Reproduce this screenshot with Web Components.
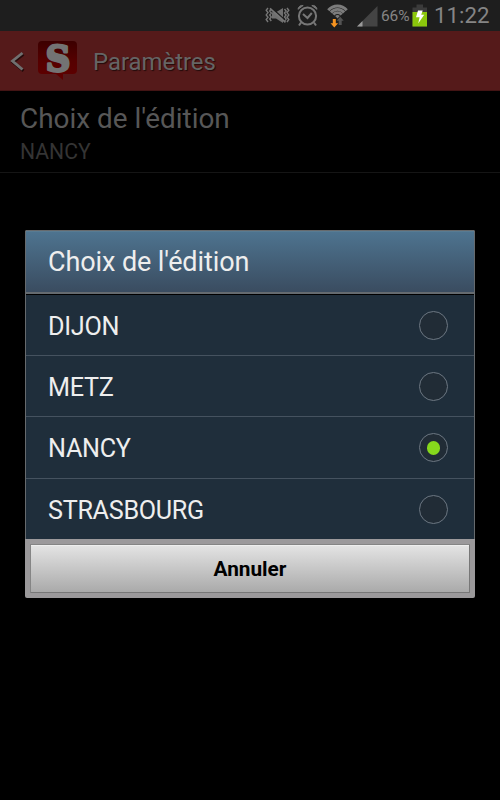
<!DOCTYPE html>
<html lang="fr">
<head>
<meta charset="utf-8">
<title>Paramètres</title>
<style>
    html, body { margin: 0; height: 100%; background: #000; }
    body { font-family: Roboto, "Noto Sans", sans-serif; overflow: hidden; }
</style>
</head>
<body>
<settings-screen>
    <status-bar slot="status" battery="66%" time="11:22"></status-bar>
    <action-bar slot="header">Paramètres</action-bar>
    <preference-item summary="NANCY">Choix de l'édition</preference-item>
    <choice-dialog slot="dialog" heading="Choix de l'édition" cancel="Annuler">
        <choice-row>DIJON</choice-row>
        <choice-row>METZ</choice-row>
        <choice-row checked>NANCY</choice-row>
        <choice-row>STRASBOURG</choice-row>
    </choice-dialog>
</settings-screen>

<script>
(function () {
    // Registers an element whose shadow root holds the given markup.
    function define(name, html, setup) {
        var template = document.createElement('template');
        template.innerHTML = html;
        customElements.define(name, class extends HTMLElement {
            connectedCallback() {
                if (this.shadowRoot) return;
                this.attachShadow({ mode: 'open' });
                this.shadowRoot.appendChild(template.content.cloneNode(true));
                if (setup) setup(this, this.shadowRoot);
            }
        });
    }

    function fill(root, id, text) {
        root.getElementById(id).textContent = text || '';
    }

    // --- Screen ---
    define('settings-screen', `
        <style>
        :host { display: block; position: relative; width: 500px; height: 800px; background: #000; }
        .overlay { position: absolute; inset: 0; padding: 230px 25px 0; }
        </style>
        <slot name="status"></slot>
        <slot name="header"></slot>
        <slot></slot>
        <div class="overlay"><slot name="dialog"></slot></div>
    `);

    // --- Status bar ---
    define('status-bar', `
        <style>
        :host { display: flex; box-sizing: border-box; height: 31px; padding-right: 6px; background: #1e1e1e; color: #858585; justify-content: flex-end; }
        svg { display: block; flex: none; }
        #battery { width: 30px; padding-left: 1px; margin-right: -1px; font-size: 15.5px; line-height: 32px; letter-spacing: -0.1px; }
        #time { width: 66px; box-sizing: border-box; padding-left: 6px; font-size: 22.3px; line-height: 31px; }
        </style>
        <svg width="120" height="31" viewBox="260 0 120 31" fill="none" stroke="#777" stroke-width="1.6">
            <!-- vibrate / muted -->
            <path d="M268 8l-1.8 2.3 1.8 2.3-1.8 2.3 1.8 2.3-1.8 2.3 1.8 2.5M271.3 9l-1.6 2 1.6 2-1.6 2 1.6 2-1.6 2 1.6 2M287 8l1.8 2.3-1.8 2.3 1.8 2.3-1.8 2.3 1.8 2.3-1.8 2.5M284.5 9l1.6 2-1.6 2 1.6 2-1.6 2 1.6 2-1.6 2" stroke-width="1.4"/>
            <path d="M272 12.3h4l7-4.3v15l-7-4.5h-4z" fill="#707070" stroke="none"/>
            <path d="M272 8.3l13 11.7" stroke="#1e1e1e" stroke-width="1.5"/>
            <path d="M270 8.3l15.5 14" stroke="#777" stroke-width="1.7"/>
            <!-- alarm clock -->
            <circle cx="307.5" cy="16" r="8.6" stroke-width="2"/>
            <path d="M303 14l4.5 4 4.3-5" stroke-width="2"/>
            <path d="M298 9.3a4.3 4.3 0 0 1 5.2-3.8zM317 9.3a4.3 4.3 0 0 0-5.2-3.8z" fill="#777" stroke-width="1"/>
            <path d="M301 22.5l-2 3M314 22.5l2 3" stroke-width="2"/>
            <!-- wifi -->
            <path d="M328.3 10.3A12 12 0 0 1 346.7 10.3M330.9 12.5A8.6 8.6 0 0 1 344.1 12.5M333.4 14.6A5.3 5.3 0 0 1 341.6 14.6" stroke="#7c7c7c" stroke-width="2.9"/>
            <path d="M335.2 16.1A3 3 0 0 1 339.8 16.1L337.5 18.5z" fill="#7c7c7c" stroke="none"/>
            <path d="M332.8 19h3v4.3h2.3l-3.8 4.2-3.8-4.2h2.3z" fill="#f79420" stroke="none"/>
            <path d="M338.7 25v-4.2h-2l3.5-4 3.5 4h-2V25z" fill="#535353" stroke="none"/>
            <!-- signal -->
            <path d="M377.5 6v20.5h-20.5z" fill="#444" stroke="none"/>
            <path d="M362.5 21v5.5h-5.5z" fill="#999" stroke="none"/>
        </svg>
        <span id="battery"></span>
        <svg width="18" height="31" viewBox="410 0 18 31">
            <path d="M416.5 4.5h6.5v3h4v19h-14.5v-19h4z" fill="#3b3b3b"/>
            <path d="M412.5 12h14.5v14.5h-14.5z" fill="#8cc70c"/>
            <path d="M418 10.5h4.7l-1.5 4.3h3l-6 8.7 1.4-6.2h-3.6z" fill="#fff"/>
        </svg>
        <span id="time"></span>
    `, function (el, root) {
        fill(root, 'battery', el.getAttribute('battery'));
        fill(root, 'time', el.getAttribute('time'));
    });

    // --- Action bar ---
    define('action-bar', `
        <style>
        :host { display: flex; height: 60px; background: #551a1a; color: #656565; box-shadow: inset 0 -1px #431414; }
        svg { display: block; flex: none; }
        .title { padding: 0 0 0 13px; font-size: 23.9px; line-height: 63px; text-shadow: 1px 1px 1px rgba(0, 0, 0, 0.6); }
        </style>
        <svg width="80" height="60" viewBox="0 31 80 60">
            <defs>
                <linearGradient id="red" x1="0" y1="0" x2="0" y2="1">
                    <stop offset="0" stop-color="#3c0000"/>
                    <stop offset="0.5" stop-color="#550000"/>
                    <stop offset="1" stop-color="#600000"/>
                </linearGradient>
            </defs>
            <path d="M23.5 54.5L13 62.3l10.5 8.5" fill="none" stroke="#250b0b" stroke-width="2.8"/>
            <path d="M22.5 53L12.5 61l10 8.5" fill="none" stroke="#707070" stroke-width="2.8"/>
            <path d="M42 41h31a4 4 0 0 1 4 4v25a4 4 0 0 1-4 4h-10v6l-7-6h-14a4 4 0 0 1-4-4v-25a4 4 0 0 1 4-4z" fill="url(#red)"/>
            <text transform="translate(58 70.5) scale(0.97 1)" text-anchor="middle" font-family="DejaVu Serif, serif" font-weight="bold" font-size="35" fill="#737373" stroke="#737373" stroke-width="2.8" stroke-linejoin="round">S</text>
        </svg>
        <div class="title"><slot></slot></div>
    `);

    // --- Preference ---
    define('preference-item', `
        <style>
        :host { display: block; box-sizing: border-box; height: 82px; padding: 11px 20px 0; border-bottom: 1px solid #151515; }
        .title { font-size: 27.9px; line-height: 33px; color: #575757; }
        #summary { font-size: 21.2px; line-height: 33px; color: #343434; }
        </style>
        <div class="title"><slot></slot></div>
        <div id="summary"></div>
    `, function (el, root) {
        fill(root, 'summary', el.getAttribute('summary'));
    });

    // --- Dialog ---
    define('choice-dialog', `
        <style>
        :host { display: block; box-sizing: border-box; height: 368px; border-radius: 2px; overflow: hidden; background: #9b999b; }
        .top { border: 1px solid #666a6d; border-bottom: 0; background: #1f2e3b; border-radius: 2px 2px 0 0; }
        #heading { box-sizing: border-box; height: 63px; padding-left: 22px; font-size: 27px; letter-spacing: -0.1px; line-height: 62px; color: #eee;
            background: linear-gradient(#4e7490, #3a4c60); border-bottom: 2px solid #656b70; box-shadow: inset 0 1px #587b92; }
        .rows { border-top: 1px solid #000; }
        .bottom { padding: 5px 5px 5px; }
        #cancel { display: block; box-sizing: border-box; width: 100%; height: 49px; margin: 0; padding: 2px 0 0; border: 1px solid #777;
            border-top-color: #858585; border-left-color: #858585; border-radius: 1px;
            background: linear-gradient(#e4e4e4, #aaa); box-shadow: inset 0 1px #eee;
            font: bold 20.8px Roboto, sans-serif; color: #000; }
        </style>
        <div class="top">
            <div id="heading"></div>
            <div class="rows"><slot></slot></div>
        </div>
        <div class="bottom"><button id="cancel"></button></div>
    `, function (el, root) {
        fill(root, 'heading', el.getAttribute('heading'));
        fill(root, 'cancel', el.getAttribute('cancel'));
    });

    define('choice-row', `
        <style>
        :host { display: flex; box-sizing: border-box; height: 61.2px; padding: 0 26px 0 22px; justify-content: space-between;
            border-bottom: 1px solid #45525f; color: #eee; font-size: 25.2px; line-height: 64px; letter-spacing: -0.3px; }
        :host(:last-of-type) { height: 60.4px; border-bottom: 0; }
        .radio { display: flex; align-items: center; justify-content: center; box-sizing: border-box; width: 29px; height: 29px;
            margin-top: 16px; border: 1.5px solid #6c7782; border-radius: 50%; background: #212c36; }
        :host([checked]) .radio::before { content: ""; width: 13.5px; height: 13.5px; border-radius: 50%; background: #86d81c; }
        </style>
        <slot></slot>
        <span class="radio"></span>
    `);
})();
</script>
</body>
</html>
